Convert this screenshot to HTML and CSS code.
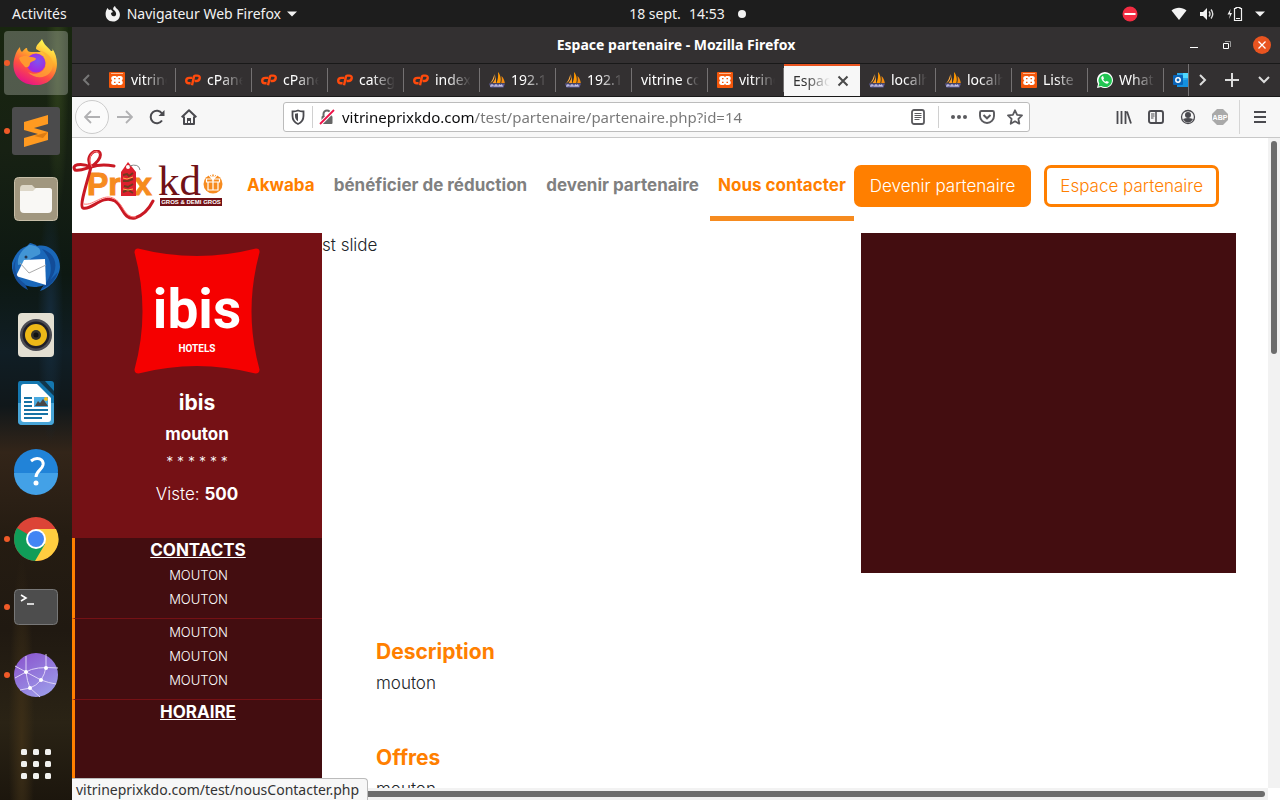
FILE: index.html
```html
<!DOCTYPE html>
<html lang="fr">
<head>
<meta charset="utf-8">
<meta name="viewport" content="width=device-width, initial-scale=1">
<title>Espace partenaire</title>
<link rel="stylesheet" href="styles.css">
</head>
<body>
<svg class="defs" aria-hidden="true">
  <symbol id="xampp" viewBox="0 0 16 16"><rect width="16" height="16" rx="1" fill="#f4570b"/><path d="M2 1.500h12" stroke="#ffb88f"/><path d="M4.500 4h2.300L8 5l1.200-1h2.300C14 4 14.500 7 12.700 8.500c1.800 1.500 1.300 4.500-1.200 4.500H9.200L8 12l-1.200 1H4.500C2 13 1.500 10 3.300 8.500 1.500 7 2 4 4.500 4z" fill="#fff"/><path d="M5 6.700h1.500M9.500 6.700H11M5 10.300h1.500M9.500 10.300H11" stroke="#f4570b" stroke-width="1.300"/></symbol>
  <symbol id="cpanel" viewBox="0 0 16 16"><path d="M7.200 5.900H4.400C2.600 5.900 1.200 7 1.200 8.700s1.200 2.500 2.700 2.500h1.700M7 13.200 9 4.600c.1-.7.500-1 1.200-1h2c1.700 0 2.800.9 2.500 2.600-.3 1.700-1.500 2.800-3.200 2.800H9.600" fill="none" stroke="#ff4a0c" stroke-width="2.400"/></symbol>
  <symbol id="pma" viewBox="0 0 16 16"><path d="M5.500 2C6 6 4.500 9.500 1 11.500c2-2.500 3.500-6 4.500-9.500z" fill="#ffad45"/><path d="M7 3v8H3.500C5.500 9 6.800 6 7 3z" fill="#f89b21"/><path d="M9 0c3 3.500 3.300 8 2.300 11H7.500C9 7.500 9.400 4 9 0z" fill="#ff9800"/><path d="M12.400 4c2.300 2 3.100 4.700 3.400 7h-3.600c.7-2.400.7-4.700.2-7z" fill="#f18b10"/><path d="M0 11.500h16L14.500 15.500H1.500z" fill="#5d5a94"/><path d="M2 15v-2h2v1.500M6 15v-2h2v2M10 15v-2h1v1h1v-1h1v2" fill="none" stroke="#d5d4ec"/></symbol>
</svg>

<header class="panel">
  <div class="panel-left">
    <button class="plain">Activités</button>
    <button class="plain app-menu">
      <svg width="16" height="16" viewBox="0 0 16 16"><path d="M2.500 2 4 4l2-.5L8 6l-2 1c0 2 1 3.200 2.500 3.200 2 0 3-1.400 2.500-3.200C10.500 5 9 4.300 8.200 3.500 8 2 8.800.8 10 0c.3 1.600 1.500 2.300 3 3.700 4 4.500 1.500 11.800-5 11.800C1 15.500-1.500 8 2.500 2z" fill="#f2f2f2"/></svg>
      Navigateur Web Firefox
      <svg width="10" height="6" viewBox="0 0 10 6"><path d="M0 .5h10L5 5.500z" fill="#f2f2f2"/></svg>
    </button>
  </div>
  <button class="plain clock"><span>18 sept.</span><span>14:53</span><i class="notice"></i></button>
  <div class="panel-right">
    <svg width="16" height="16" viewBox="0 0 16 16"><circle cx="8" cy="8" r="7.500" fill="#f22c42"/><path d="M2.500 8h11" stroke="#fff" stroke-width="2"/></svg>
    <button class="plain status" aria-label="Système">
      <svg width="16" height="14" viewBox="0 0 16 14"><path d="M.5 3.500c4.500-3.600 10.500-3.600 15 0L8 13z" fill="#f2f2f2"/></svg>
      <svg width="16" height="14" viewBox="0 0 16 14"><path d="M1 5h3l4-4v12L4 9H1z" fill="#f2f2f2"/><path d="M10 4.500q2 2.500 0 5M12 2.500q3.500 4.500 0 9" fill="none" stroke="#ddd" stroke-width="1.400"/></svg>
      <svg width="16" height="16" viewBox="0 0 16 16"><path d="M3.500 3 .5 8.500H3L2 13l3-6H3z" fill="#f2f2f2"/><path d="M7.500 2.500H9v-1h4v1h1.500v12h-7zM9 12.500h4" fill="none" stroke="#f2f2f2" stroke-width="1.200"/></svg>
      <svg width="10" height="6" viewBox="0 0 10 6"><path d="M0 .5h10L5 5.500z" fill="#f2f2f2"/></svg>
    </button>
  </div>
</header>

<div class="desktop">
<nav class="dock" aria-label="Applications">
  <button class="launcher running current" aria-label="Firefox">
    <svg width="48" height="48" viewBox="0 0 48 48"><defs><linearGradient id="ff" x1=".8" y1="0" x2=".3" y2="1"><stop offset=".1" stop-color="#fff44f"/><stop offset=".4" stop-color="#ffa92c"/><stop offset=".68" stop-color="#ff5041"/><stop offset="1" stop-color="#e5108b"/></linearGradient><radialGradient id="fp" cx=".6" cy=".4"><stop stop-color="#7b55f0"/><stop offset="1" stop-color="#a12be0"/></radialGradient></defs><path d="M3 17c1-4 3-7 5-9 0 3 1 4 2 5 2-2 3-4 5-4 0 3 2 4 4 4h10l-5-3c0-5 4-6 6-10 2 6 6 8 9 12 2 0 2-1 1-3 10 14 5 37-16 37C5 46-2 31 3 17z" fill="url(#ff)"/><circle cx="24" cy="24" r="9.500" fill="url(#fp)"/><path d="M7 19c4-3 9-2 12-1 3 0 5 1 5 2-1 2-4 2-6 4 0 3-2 5-5 4-2-3-5-5-6-9z" fill="#ff9830"/><path d="M26 11c6 2 10 8 8 14-1 9-11 12-18 8 11 12 29 2 24-12-2-5-8-9-14-10z" fill="#ffae32" opacity=".7"/></svg>
  </button>
  <button class="launcher running" aria-label="Sublime Text">
    <svg width="48" height="48" viewBox="0 0 48 48"><rect width="48" height="48" rx="3" fill="#4b4b4c"/><path d="m12 15 24-7v9l-14 4 14 4v8l-24 7v-9l14-4-14-4z" fill="#ff9a20"/><path d="m22 29 14-4-5 6z" fill="#dc7c12"/></svg>
  </button>
  <button class="launcher" aria-label="Fichiers">
    <svg width="48" height="48" viewBox="0 0 48 48"><rect x="2.500" y="2.500" width="43" height="43" rx="4" fill="#a1977f" stroke="#c7bea8"/><path d="M8 14q0-4 3-4h9l3 3h14q3 0 3 3v4H8z" fill="#ddd7c8"/><path d="M8 16h13l3-3h13q3 0 3 3v18q0 4-4 4H12q-4 0-4-4z" fill="#f9f8f5"/></svg>
  </button>
  <button class="launcher" aria-label="Thunderbird">
    <svg width="48" height="48" viewBox="0 0 48 48"><path d="M18 0c3 1 5 1 7 3 13-3 23 8 23 21-1 13-13 22-20 24l4-6C15 49-2 37 0 20 3 11 8 5 15 3z" fill="#1a67b9"/><path d="M17 2c7 0 13 3 11 9-4 3-10 3-13 9L6 22c-1-8 3-15 11-20z" fill="#4295d5"/><path d="M30 6c15 5 17 19 8 31l8-8c-3 9-8 14-17 17 13-13 13-27 1-40z" fill="#124c98"/><path d="M12 17 33 16 34 42 4 33z" fill="#fff"/><path d="M8 20 17 30 34 22" fill="none" stroke="#aaa" stroke-width="1"/><path d="M4 16C1 27 5 36 13 41l3 6C1 40-2 26 4 16z" fill="#164f9b"/><circle cx="14" cy="14" r="1.500" fill="#263750"/></svg>
  </button>
  <button class="launcher" aria-label="Rhythmbox">
    <svg width="48" height="48" viewBox="0 0 48 48"><rect x="6" y="2" width="36" height="44" rx="4" fill="#e3dfd2"/><circle cx="24" cy="24" r="16" fill="#4c4c53"/><circle cx="24" cy="24" r="13.500" fill="#201f28"/><circle cx="24" cy="24" r="11" fill="#edb818"/><circle cx="24" cy="24" r="5" fill="#34312b"/><circle cx="24" cy="24" r="2.500" fill="#111"/></svg>
  </button>
  <button class="launcher" aria-label="LibreOffice Writer">
    <svg width="48" height="48" viewBox="0 0 48 48"><path d="M8 2h31q3 0 3 3v37q0 4-4 4H10q-4 0-4-4V5q0-3 2-3z" fill="#1477b0"/><path d="M6 24h36v18q0 4-4 4H10q-4 0-4-4z" fill="#48a5d8"/><path d="M12 5h13l14 14v21q0 3-3 3H12q-3 0-3-3V8q0-3 3-3z" fill="#fff"/><path d="M27 2h6l9 10v5z" fill="#12364b"/><path d="M12 19h8M12 23h8M12 27h8M12 31h24M12 35h24M12 39h18" stroke="#1672a5" stroke-width="2"/><path d="M22 18h14v10H22z" fill="#4babe1"/><path d="m23 27 3-5 2 2 3-4 5 7z" fill="#474747"/><circle cx="34" cy="20" r="2" fill="#f4bb20"/></svg>
  </button>
  <button class="launcher" aria-label="Aide">
    <svg width="48" height="48" viewBox="0 0 48 48"><circle cx="24" cy="24" r="22" fill="#2183d8"/><path d="M2 26h44a22 22 0 0 1-44 0z" fill="#43a1e7"/><path d="M19 14c6-5 13-2 12 4-1 5-7 6-7 12" fill="none" stroke="#fff" stroke-width="3"/><circle cx="24" cy="36" r="2.500" fill="#fff"/></svg>
  </button>
  <button class="launcher running" aria-label="Chrome">
    <svg width="48" height="48" viewBox="0 0 48 48"><circle cx="24" cy="24" r="22" fill="#dc4437"/><path d="M5 13a22 22 0 0 0 19 33l10-17-10-5z" fill="#109d58"/><path d="M24 14h20a22 22 0 0 1-21 32l10-17z" fill="#ffcd40"/><circle cx="24" cy="24" r="10" fill="#fff"/><circle cx="24" cy="24" r="8" fill="#4285f4"/></svg>
  </button>
  <button class="launcher running" aria-label="Terminal">
    <svg width="48" height="48" viewBox="0 0 48 48"><rect x="2.500" y="6.500" width="43" height="35" rx="4" fill="#4d4d4d" stroke="#777"/><path d="m9 12 5 3-5 3M15 21h7" fill="none" stroke="#fff" stroke-width="1.600"/></svg>
  </button>
  <button class="launcher running" aria-label="Web">
    <svg width="48" height="48" viewBox="0 0 48 48"><defs><linearGradient id="web" x1="0" y1="0" x2=".6" y2="1"><stop stop-color="#8950cc"/><stop offset="1" stop-color="#9b98e8"/></linearGradient></defs><circle cx="24" cy="24" r="22" fill="url(#web)"/><path d="M14 5v16q9-6 32-4M3 15l11 6 15 8q8 3 15 4M3 27l11-6q1 9 4 16l10 9M34 3v13q-1 7-5 13-5 6-11 8L8 39" fill="none" stroke="#ded3f7" stroke-width="1"/><g fill="#fff"><circle cx="14" cy="21" r="2"/><circle cx="34" cy="17" r="2"/><circle cx="29" cy="29" r="2"/><circle cx="18" cy="37" r="2"/></g></svg>
  </button>
  <button class="launcher all-apps" aria-label="Afficher les applications">
    <svg width="32" height="32" viewBox="0 0 32 32" fill="#f1f1ee"><g id="dots"><rect x="1" y="1" width="6" height="6" rx="1.500"/><rect x="13" y="1" width="6" height="6" rx="1.500"/><rect x="25" y="1" width="6" height="6" rx="1.500"/></g><use href="#dots" y="12"/><use href="#dots" y="24"/></svg>
  </button>
</nav>

<section class="window">
  <div class="titlebar">
    <span class="title">Espace partenaire - Mozilla Firefox</span>
    <div class="controls">
      <button class="plain" aria-label="Réduire"><svg width="8" height="8" viewBox="0 0 8 8"><path d="M0 6.500h8" stroke="#fff"/></svg></button>
      <button class="plain" aria-label="Restaurer"><svg width="8" height="8" viewBox="0 0 8 8"><path d="M.5 2.500h5v5h-5z" fill="none" stroke="#fff"/><path d="M2 .5h5.500V6" fill="none" stroke="#999"/></svg></button>
      <button class="plain close" aria-label="Fermer"><svg width="8" height="8" viewBox="0 0 8 8"><path d="m.5.5 7 7m0-7-7 7" stroke="#fff" stroke-width="1.300"/></svg></button>
    </div>
  </div>

  <div class="tabbar">
    <button class="plain scroll-left" aria-label="Onglets précédents"><svg width="8" height="12" viewBox="0 0 8 12"><path d="M7 1 2 6l5 5" fill="none" stroke="#777" stroke-width="2"/></svg></button>
    <div class="tabs" role="tablist">
      <button class="tab" role="tab"><svg><use href="#xampp"/></svg><span>vitrine</span></button>
      <button class="tab" role="tab"><svg><use href="#cpanel"/></svg><span>cPanel</span></button>
      <button class="tab" role="tab"><svg><use href="#cpanel"/></svg><span>cPanel</span></button>
      <button class="tab" role="tab"><svg><use href="#cpanel"/></svg><span>categ</span></button>
      <button class="tab" role="tab"><svg><use href="#cpanel"/></svg><span>index</span></button>
      <button class="tab" role="tab"><svg><use href="#pma"/></svg><span>192.1</span></button>
      <button class="tab" role="tab"><svg><use href="#pma"/></svg><span>192.1</span></button>
      <button class="tab" role="tab"><span class="long">vitrine co</span></button>
      <button class="tab" role="tab"><svg><use href="#xampp"/></svg><span>vitrine</span></button>
      <button class="tab selected" role="tab" aria-selected="true"><span>Espace</span><svg class="tab-close" viewBox="0 0 16 16"><path d="m3.500 3.500 9 9m0-9-9 9" stroke="#4a4a4a" stroke-width="2"/></svg></button>
      <button class="tab" role="tab"><svg><use href="#pma"/></svg><span>localh</span></button>
      <button class="tab" role="tab"><svg><use href="#pma"/></svg><span>localh</span></button>
      <button class="tab" role="tab"><svg><use href="#xampp"/></svg><span>Liste</span></button>
      <button class="tab" role="tab"><svg viewBox="0 0 16 16"><path d="M0 16 1 12A8 8 0 1 1 4 15z" fill="#fff"/><path d="m1.500 14.500.8-2.900A6.700 6.700 0 1 1 4.500 14z" fill="#22c653"/><path d="M5.500 4 4.300 5.300c-.2 3 3 6.300 6 6.400l1.500-1.200-.2-.8-2-.8-1 .9C7.500 9.300 6.700 8.500 6.200 7.400L7 6.500l-.8-2.300z" fill="#fff"/></svg><span>What</span></button>
      <button class="tab" role="tab"><svg viewBox="0 0 16 16"><path d="M4 1h12v14H4z" fill="#28a8ea"/><path d="M10 1h6v5h-6z" fill="#50d9ff"/><path d="m4 10 12-3v8H4z" fill="#1490df"/><rect y="3" width="10" height="10" rx="1" fill="#0964b8"/><circle cx="5" cy="8" r="2.200" fill="none" stroke="#fff" stroke-width="1.500"/></svg></button>
    </div>
    <div class="tab-tools">
      <button class="plain" aria-label="Onglets suivants"><svg width="8" height="12" viewBox="0 0 8 12"><path d="m1 1 5 5-5 5" fill="none" stroke="#ddd" stroke-width="2"/></svg></button>
      <button class="plain" aria-label="Nouvel onglet"><svg width="14" height="14" viewBox="0 0 14 14"><path d="M7 0v14M0 7h14" stroke="#ddd" stroke-width="2"/></svg></button>
      <button class="plain" aria-label="Liste des onglets"><svg width="12" height="8" viewBox="0 0 12 8"><path d="m1 1 5 5 5-5" fill="none" stroke="#ddd" stroke-width="2"/></svg></button>
    </div>
  </div>

  <div class="toolbar">
    <div class="nav-buttons">
      <button class="plain back" aria-label="Précédent"><svg viewBox="0 0 16 16"><path d="M16 8H1M7 2 1 8l6 6" fill="none" stroke="#b1b1b3" stroke-width="1.800"/></svg></button>
      <button class="plain" aria-label="Suivant"><svg viewBox="0 0 16 16"><path d="M0 8h15M9 2l6 6-6 6" fill="none" stroke="#b1b1b3" stroke-width="1.800"/></svg></button>
      <button class="plain" aria-label="Actualiser"><svg viewBox="0 0 16 16"><path d="M13 11.500A6.200 6.200 0 1 1 13 4.500L14 6" fill="none" stroke="#4a4a4f" stroke-width="2"/><path d="M15.500 1v6H9.500z" fill="#4a4a4f"/></svg></button>
      <button class="plain" aria-label="Accueil"><svg viewBox="0 0 16 16"><path d="m.7 8.200 7.300-7 7.300 7M3 7.500V15h10V7.500" fill="none" stroke="#4a4a4f" stroke-width="2" stroke-linejoin="round"/><path d="M6 9h4v6H9v-3H7v3H6z" fill="#4a4a4f"/></svg></button>
    </div>
    <div class="urlbar">
      <svg viewBox="0 0 16 16"><path d="M8 1.500c2 .9 3.600 1 5.500 1V7c0 4-2 6.500-5.500 8-3.500-1.500-5.500-4-5.500-8V2.500c2 0 3.500-.1 5.500-1z" fill="none" stroke="#4a4a4f" stroke-width="1.800"/><path d="M8 4.200v8C6 11 5 9.500 5 7V4.700z" fill="#4a4a4f"/></svg>
      <i class="divider"></i>
      <svg viewBox="0 0 16 16"><path d="M4.500 8V5a3.500 3.500 0 0 1 7 0v3" fill="none" stroke="#666" stroke-width="2"/><rect x="2.500" y="7" width="11" height="8" rx="1" fill="#666"/><path d="M1 15 15 1" stroke="#fff" stroke-width="4"/><path d="M1 15 15 1" stroke="#ee1248" stroke-width="1.800"/></svg>
      <input type="text" aria-label="Adresse" value="vitrineprixkdo.com/test/partenaire/partenaire.php?id=14">
      <button class="plain" aria-label="Mode lecture"><svg viewBox="0 0 16 16"><rect x="2" y="1" width="12" height="14" rx="2" fill="none" stroke="#5a5a5e" stroke-width="1.800"/><path d="M4.500 4.500h7M4.500 6.500h7M4.500 8.500h7M4.500 10.500h5" stroke="#5a5a5e"/></svg></button>
      <i class="divider wide"></i>
      <button class="plain" aria-label="Actions"><svg viewBox="0 0 16 16" fill="#5a5a5e"><circle cx="2" cy="8" r="2"/><circle cx="8" cy="8" r="2"/><circle cx="14" cy="8" r="2"/></svg></button>
      <button class="plain" aria-label="Pocket"><svg viewBox="0 0 16 16"><path d="M2.500 2h11q1.500 0 1.500 1.500V7a7 7 0 0 1-14 0V3.500Q1 2 2.500 2z" fill="none" stroke="#5a5a5e" stroke-width="1.900"/><path d="m4.500 6 3.500 3.300L11.500 6" fill="none" stroke="#5a5a5e" stroke-width="2"/></svg></button>
      <button class="plain" aria-label="Marque-page"><svg viewBox="0 0 16 16"><path d="m8 1.300 2.100 4.500 4.900.6-3.600 3.400.9 4.900L8 12.300l-4.300 2.400.9-4.900L1 6.400l4.900-.6z" fill="none" stroke="#5a5a5e" stroke-width="1.800" stroke-linejoin="round"/></svg></button>
    </div>
    <div class="extras">
      <button class="plain" aria-label="Bibliothèque"><svg viewBox="0 0 16 16"><path d="M1.500 2v13M5.500 2v13M9.500 2v13M11 2.500l4 12" fill="none" stroke="#4a4a4f" stroke-width="1.800"/></svg></button>
      <button class="plain" aria-label="Panneau"><svg viewBox="0 0 16 16"><rect x="1" y="2" width="14" height="12" rx="2" fill="none" stroke="#4a4a4f" stroke-width="1.900"/><path d="M8 2v12" stroke="#4a4a4f" stroke-width="1.500"/><path d="M3 5h3.500M3 7h3.500M3 9h2.500" stroke="#4a4a4f"/></svg></button>
      <button class="plain" aria-label="Compte"><svg viewBox="0 0 16 16"><circle cx="8" cy="8" r="6.500" fill="none" stroke="#4a4a4f" stroke-width="1.300"/><circle cx="8" cy="6" r="3" fill="#4a4a4f"/><path d="M3 10q5-2 10 0-2 3.500-5 3.500T3 10z" fill="#4a4a4f"/></svg></button>
      <button class="plain" aria-label="Adblock Plus"><svg viewBox="0 0 16 16"><path d="M5 0h6l5 5v6l-5 5H5l-5-5V5z" fill="#a9a9a9"/><text x="8" y="10.500" class="abp">ABP</text></svg></button>
      <button class="plain menu" aria-label="Menu"><svg viewBox="0 0 16 16"><path d="M2 3h12M2 8h12M2 13h12" stroke="#4a4a4f" stroke-width="2"/></svg></button>
    </div>
  </div>

  <div class="viewport">
    <div class="page">
      <header class="site-header">
        <a href="#" class="logo" aria-label="Prix kdo">
          <svg width="153" height="72" viewBox="0 0 153 72">
            <text x="15" y="45" class="logo-prix">Pr</text><text x="62" y="45" class="logo-prix">x</text>
            <g fill="none" stroke="#c91924" stroke-width="3" stroke-linecap="round"><path d="M19 17C12 5 25-3 28 3c2 5-5 11-9 14C8 12-1 15 3 20c7 1 11-2 16-3 9-3 17-2 23-1M19 17C15 33 7 56 11 58c9 3 18-14 32-7 8 5 8 19 20 17 9-3 14-9 18-17"/></g>
            <path d="M20 17C13 5 25-3 27 4M12 54c10 2 19-12 31-5 9 6 9 19 21 18" fill="none" stroke="#ff7775"/>
            <path d="m49 22 7-10 8 10v24H49z" fill="#dc202d"/><circle cx="56" cy="17" r="2" fill="#fff"/><path d="m51 25 4-1 2 2 4-3M51 31h5l5-2M52 36l4 1 5-3M51 42l5-2 5 3" fill="none" stroke="#713b20" stroke-width="2"/><path d="m51 28 4 1 6-2M51 39l5 1 5-1" fill="none" stroke="#ffb04e" stroke-width="1"/><path d="M57 16q10-3 11 4" fill="none" stroke="#888"/>
            <text x="86" y="45" class="logo-kdo">kd</text>
            <circle cx="141" cy="34" r="9.500" fill="#f68b1f"/><path d="M136 32h10v8h-10zM134.500 29h13v3h-13zM141 29v11M141 29q-6-4-2-5zM141 29q6-4 2-5z" fill="none" stroke="#fff" stroke-width="1.200"/>
            <rect x="88" y="48" width="62" height="8" fill="#711116"/><text x="119" y="54" class="logo-tag">GROS &amp; DEMI GROS</text>
          </svg>
        </a>
        <nav class="site-nav">
          <a href="#" class="accent">Akwaba</a>
          <a href="#">bénéficier de réduction</a>
          <a href="#">devenir partenaire</a>
          <a href="#" class="accent active">Nous contacter</a>
        </nav>
        <div class="actions">
          <a href="#" class="btn solid">Devenir partenaire</a>
          <a href="#" class="btn outline">Espace partenaire</a>
        </div>
      </header>
      <div class="columns">
        <aside class="profile">
          <div class="identity">
            <svg width="126" height="126" viewBox="0 0 126 126"><path d="M4 .5q59 15 118 0 4 0 3.500 4-16 59 0 117 0 4-4 4-59-15-117 0-4 0-4-4 16-58 0-117 0-4 3.500-4z" fill="#f50000"/><text x="63" y="80" class="ibis">ibis</text><text x="63" y="104" class="hotels">HOTELS</text></svg>
            <h1>ibis</h1>
            <h2>mouton</h2>
            <p class="stars">* * * * * *</p>
            <p class="visits">Viste: <b>500</b></p>
          </div>
          <section class="info"><h3>CONTACTS</h3><p>MOUTON</p><p>MOUTON</p></section>
          <section class="info lines"><p>MOUTON</p><p>MOUTON</p><p>MOUTON</p></section>
          <section class="info last"><h3>HORAIRE</h3></section>
        </aside>
        <main class="content">
          <div class="hero"><span>st slide</span><div class="block"></div></div>
          <section class="article"><h2>Description</h2><p>mouton</p></section>
          <section class="article"><h2>Offres</h2><p>mouton</p></section>
        </main>
      </div>
    </div>
    <div class="vscroll"><i></i></div>
    <div class="hscroll"><i></i></div>
    <div class="link-status">vitrineprixkdo.com/test/nousContacter.php</div>
  </div>
</section>
</div>
</body>
</html>
```
FILE: styles.css
```css
* { box-sizing: border-box; }

body {
  margin: 0;
  height: 100vh;
  display: flex;
  flex-direction: column;
  overflow: hidden;
  font: 14px/20px "Noto Sans", sans-serif;
  color: #f2f2f2;
}

.defs { display: none; }
svg { display: block; flex: none; }
h1, h2, h3, p { margin: 0; }

.plain {
  display: flex;
  align-items: center;
  justify-content: center;
  padding: 0;
  border: 0;
  background: none;
  color: inherit;
  font: inherit;
  white-space: nowrap;
}

/* Top panel */
.panel {
  flex: 0 0 27px;
  display: grid;
  grid-template-columns: 49% 1fr auto;
  align-items: center;
  background: #1d1d1d;
}
.panel-left { display: flex; gap: 38px; padding-left: 12px; }
.app-menu { gap: 6px; }
.clock { justify-self: start; gap: 8px; padding-left: 2px; }
.notice { width: 8px; height: 8px; margin-left: 5px; border-radius: 50%; background: #f2f2f2; }
.panel-right { display: flex; align-items: center; gap: 33px; padding-right: 15px; }
.status { gap: 12px; }

.desktop { flex: 1; min-height: 0; display: flex; }

/* Dock */
.dock {
  flex: 0 0 72px;
  display: flex;
  flex-direction: column;
  align-items: center;
  gap: 4px;
  padding: 4px 0;
  background:
    radial-gradient(ellipse at 80% 5%, #30411c 0, transparent 14%),
    radial-gradient(ellipse at 70% 38%, #152b3b 0, transparent 18%),
    radial-gradient(ellipse at 30% 92%, #3c2e17 0, transparent 18%),
    linear-gradient(#18260f 0, #172113 16%, #0d1812 32%, #101e25 42%, #10171a 49%, #332519 55%, #251c12 66%, #201911 78%, #2a2315 90%, #1c160d 100%);
}
.launcher {
  flex: 0 0 64px;
  width: 64px;
  display: grid;
  place-items: center;
  position: relative;
  padding: 0;
  border: 0;
  border-radius: 4px;
  background: none;
}
.launcher.current { background: rgba(255, 255, 255, .25); }
.running::before {
  content: "";
  position: absolute;
  left: 0;
  top: 29px;
  width: 6px;
  height: 6px;
  border-radius: 50%;
  background: #f05a28;
}
.all-apps { margin-top: auto; }

/* Browser window */
.window { flex: 1; min-width: 0; display: flex; flex-direction: column; }

.titlebar {
  flex: 0 0 37px;
  display: grid;
  grid-template-columns: 1fr auto 1fr;
  align-items: center;
  background: #333031;
  border-bottom: 1px solid #191919;
  font-weight: 700;
}
.title { grid-column: 2; color: #fff; }
.controls { display: flex; justify-content: flex-end; align-items: center; gap: 19px; padding-right: 9px; }
.controls .plain { width: 14px; height: 18px; }
.controls .close { width: 18px; border-radius: 50%; background: #e95420; }

.tabbar {
  flex: 0 0 33px;
  display: flex;
  background: #333031;
  border-bottom: 1px solid #191919;
}
.scroll-left { width: 28px; }
.tabs { flex: 1; min-width: 0; display: flex; overflow: hidden; }
.tab {
  flex: 0 0 76px;
  min-width: 0;
  display: flex;
  align-items: center;
  gap: 6px;
  padding: 0 9px;
  border: 0;
  background: linear-gradient(#747172, #747172) right center / 1px 24px no-repeat;
  color: #fff;
  font: inherit;
}
.tab svg { width: 16px; height: 16px; }
.tab span {
  flex: 1;
  min-width: 0;
  overflow: hidden;
  text-align: left;
  white-space: nowrap;
  -webkit-mask-image: linear-gradient(90deg, #000 35%, transparent);
  mask-image: linear-gradient(90deg, #000 35%, transparent);
}
.tab .long {
  -webkit-mask-image: linear-gradient(90deg, #000 70%, transparent);
  mask-image: linear-gradient(90deg, #000 70%, transparent);
}
.tab.selected {
  gap: 5px;
  background: #f7f7f7;
  border-top: 2px solid #e95420;
  color: #333;
}
.tab-tools {
  display: flex;
  border-left: 1px solid #747172;
}
.tab-tools .plain { width: 27px; }
.tab-tools .plain + .plain { width: 32px; }

.toolbar {
  flex: 0 0 41px;
  display: flex;
  align-items: center;
  padding: 0 0 0 3px;
  background: #f7f7f7;
  border-bottom: 1px solid #c8c8c8;
}
.toolbar svg { width: 16px; height: 16px; }
.nav-buttons { display: flex; align-items: center; }
.nav-buttons .plain { width: 32px; height: 32px; }
.nav-buttons .back { width: 34px; height: 34px; border: 1px solid #ccc; border-radius: 50%; background: #fbfbfb; }
.urlbar {
  flex: 1;
  min-width: 0;
  height: 30px;
  display: flex;
  align-items: center;
  gap: 6px;
  margin: 0 78px;
  padding: 0 3px 0 6px;
  border: 1px solid #bcbcbc;
  border-radius: 3px;
  background: #fff;
}
.urlbar .plain { width: 22px; height: 28px; }
.divider { width: 1px; height: 22px; background: #d0d0d0; }
.divider.wide { margin: 0 3px; }
.urlbar input {
  flex: 1;
  min-width: 0;
  padding: 0 0 0 1px;
  border: 0;
  outline: 0;
  font: inherit;
  font-size: 15px;
  color: transparent;
  background: linear-gradient(90deg, #0c0c0d 134px, #777 134px);
  -webkit-background-clip: text;
  background-clip: text;
}
.extras { display: flex; align-items: center; }
.extras .plain { width: 32px; height: 34px; }
.extras .menu { width: 41px; margin-left: 3px; border-left: 1px solid #d5d5d5; }
.abp { font: 700 7px "Liberation Sans", sans-serif; fill: #fff; text-anchor: middle; }

/* Web page */
.viewport {
  flex: 1;
  min-height: 0;
  position: relative;
  display: grid;
  grid-template: minmax(0, 1fr) 12px / minmax(0, 1fr) 12px;
  background: #fff;
}
.page {
  overflow: hidden;
  display: flex;
  flex-direction: column;
  font: 300 17px/24px Inter, sans-serif;
  color: #212529;
}
b { font-weight: 700; }
.site-header {
  flex: 0 0 95px;
  display: flex;
  align-items: center;
  padding-right: 49px;
}
.logo { flex: none; }
.site-nav { align-self: stretch; display: flex; flex: 1; justify-content: space-between; margin-left: 14px; }
.site-nav a {
  margin: 0 0 12px;
  padding: 35px 8px 0;
  border-bottom: 5px solid transparent;
  color: #808080;
  font-weight: 700;
  text-decoration: none;
  white-space: nowrap;
}
.site-nav .accent { color: #ff7f00; }
.site-nav .active { border-color: #f68b1f; }
.actions { display: flex; gap: 13px; }
.btn {
  padding: 6px 13px;
  border: 3px solid #ff7f00;
  border-radius: 7px;
  color: #ff7f00;
  text-decoration: none;
  white-space: nowrap;
}
.btn.solid { background: #ff7f00; color: #fff; }
.logo-prix { font: 700 32px "Liberation Sans", sans-serif; fill: #f68b1f; stroke: #f68b1f; stroke-width: 1px; }
.logo-kdo { font: 43px "Liberation Serif", serif; fill: #711116; }
.logo-tag { font: 700 6px "Liberation Sans", sans-serif; fill: #fff; text-anchor: middle; }

.columns { flex: 1; min-height: 0; display: flex; }
.profile { flex: 0 0 250px; display: flex; flex-direction: column; background: #430d10; color: #fff; text-align: center; }
.identity { flex: none; padding: 15px 0 32px; background: #751115; }
.identity svg { margin: 0 auto 16px; }
.ibis { font: 700 55px Roboto, sans-serif; fill: #fff; text-anchor: middle; }
.hotels { font: 700 10px Roboto, sans-serif; fill: #fff; text-anchor: middle; }
.identity h1 { font-size: 21px; line-height: 26px; }
.identity h2 { margin-top: 6px; font-size: 17px; line-height: 24px; }
.stars { font-size: 14px; line-height: 32px; }
.visits { margin-top: 4px; }
.info { padding-bottom: 7px; border-left: 3px solid #ff7f00; border-bottom: 1px solid #751115; font-size: 13px; }
.info h3 { padding-right: 1px; font-size: 17px; line-height: 25px; text-decoration: underline; }
.info.lines { padding-top: 1px; }
.info.last { flex: 1; border-bottom: 0; }

.content { flex: 1; min-width: 0; }
.hero { display: flex; justify-content: space-between; height: 340px; margin-bottom: 66px; padding-right: 32px; }
.block { width: 375px; background: #430d10; }
.article { padding-left: 54px; margin-bottom: 50px; }
.article h2 { margin-bottom: 6px; color: #ff7f00; font-size: 21px; line-height: 26px; }

.vscroll { padding: 3px; background: #f2f2f2; }
.vscroll i { display: block; height: 33%; border-radius: 3px; background: #6d6d6d; }
.hscroll { padding: 3px; background: #f2f2f2; }
.hscroll i { display: block; height: 6px; border-radius: 3px; background: #6d6d6d; }
.link-status {
  position: absolute;
  left: 0;
  bottom: 0;
  padding: 1px 8px 0 4px;
  border: 1px solid #bbb;
  border-width: 1px 1px 0 0;
  border-radius: 0 4px 0 0;
  background: #f7f7f7;
  color: #333;
}
```
